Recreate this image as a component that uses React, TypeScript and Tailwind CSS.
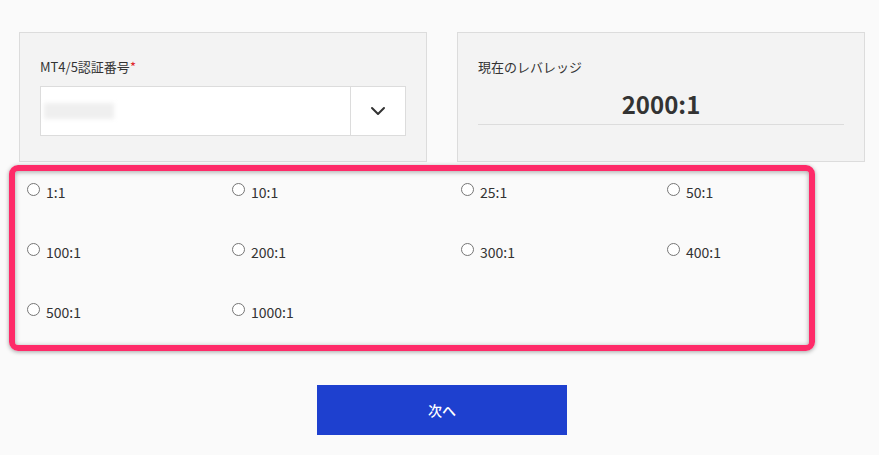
import React from "react";

const options = [
  ["1:1", "10:1", "25:1", "50:1"],
  ["100:1", "200:1", "300:1", "400:1"],
  ["500:1", "1000:1"],
];

function Radio({ label }: { label: string }) {
  return (
    <label className="flex items-start gap-[6px] text-[14px] leading-[20px] text-[#333]">
      <span className="mt-[2px] block h-[13px] w-[13px] rounded-full border border-[#767676] bg-white" />
      <span className="mt-[1px]">{label}</span>
    </label>
  );
}

export default function App() {
  return (
    <div
      className="relative min-h-[455px] w-[879px] overflow-hidden bg-[#fafafa]"
      style={{ fontFamily: '"Noto Sans CJK JP", "Noto Sans", sans-serif' }}
    >
      <div className="ml-[19px] w-[846px] pt-[32px]">
        <div className="flex gap-[30px]">
          <div className="h-[130px] w-[408px] border border-[#dcdcdc] bg-[#f3f3f3] px-[20px] pt-[24px]">
            <div className="text-[13px] leading-[20px] text-[#333]">
              MT4/5認証番号<span className="text-[#e0262d]">*</span>
            </div>
            <div className="mt-[9px] flex h-[50px] w-[366px] border border-[#dcdcdc] bg-white">
              <div className="flex flex-1 items-center pl-[3px]">
                <div className="h-[16px] w-[70px] bg-[#efefef] blur-[2px]" />
              </div>
              <div className="flex w-[55px] items-center justify-center border-l border-[#dcdcdc]">
                <svg width="16" height="10" viewBox="0 0 16 10" fill="none">
                  <path d="M2 2 L8 8 L14 2" stroke="#333" strokeWidth="2" strokeLinecap="round" strokeLinejoin="round" />
                </svg>
              </div>
            </div>
          </div>
          <div className="h-[130px] w-[410px] border border-[#dcdcdc] bg-[#f3f3f3] px-[20px] pt-[24px]">
            <div className="text-[13px] leading-[20px] text-[#333]">現在のレバレッジ</div>
            <div className="mt-[11px] border-b border-[#dcdcdc] pb-[4px] text-center text-[24px] font-bold leading-[32px] text-[#333]">
              2000:1
            </div>
          </div>
        </div>

        <div className="mt-[19px] flex flex-col gap-[39px] pl-[8px]">
          {options.map((row, i) => (
            <div key={i} className="grid grid-cols-[205px_229px_206px_200px]">
              {row.map((o) => (
                <Radio key={o} label={o} />
              ))}
            </div>
          ))}
        </div>

        <div className="mt-[63px] flex justify-center">
          <button className="h-[50px] w-[250px] bg-[#1e40cf] text-[14px] font-medium text-white">
            次へ
          </button>
        </div>
      </div>

      <div className="pointer-events-none absolute left-[9px] top-[165px] h-[186px] w-[806px] rounded-[9px] border-[6px] border-[#fe2a68] shadow-[0_1px_4px_rgba(0,0,0,0.35),inset_0_1px_5px_rgba(0,0,0,0.35)]" />
    </div>
  );
}
